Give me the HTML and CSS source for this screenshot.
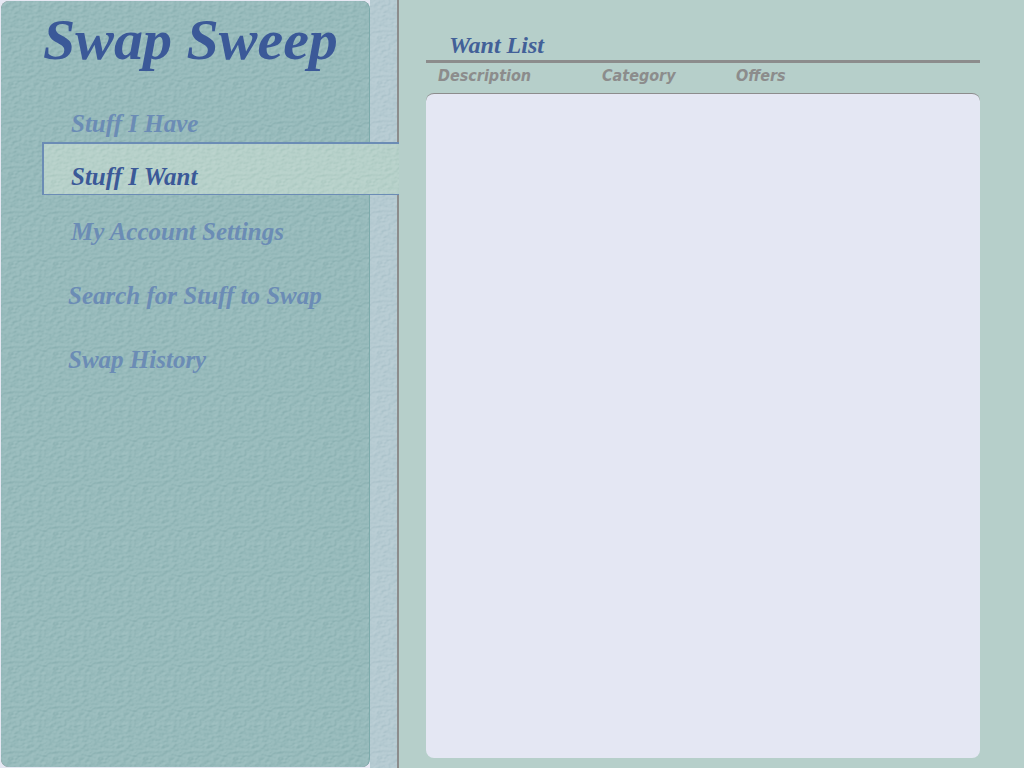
FILE: index.html
```html
<!DOCTYPE html>
<html lang="en">
<head>
<meta charset="utf-8">
<meta name="viewport" content="width=device-width, initial-scale=1">
<title>Swap Sweep</title>
<link rel="stylesheet" href="styles.css">
</head>
<body>
<div class="app">
  <div class="rail">
    <aside class="sidebar textured">
      <h1 class="brand">Swap Sweep</h1>
      <nav class="menu">
        <a class="menu-link" href="#have">Stuff I Have</a>
        <a class="menu-link active textured" href="#want" aria-current="page">Stuff I Want</a>
        <a class="menu-link" href="#account">My Account Settings</a>
        <a class="menu-link spaced" href="#search">Search for Stuff to Swap</a>
        <a class="menu-link spaced" href="#history">Swap History</a>
      </nav>
    </aside>
    <div class="strip textured"></div>
  </div>
  <main class="content">
    <h2 class="heading">Want List</h2>
    <table class="list">
      <thead>
        <tr><th class="description">Description</th><th class="category">Category</th><th>Offers</th></tr>
      </thead>
    </table>
    <div class="panel"></div>
  </main>
</div>
</body>
</html>
```

FILE: styles.css
```css
* { box-sizing: border-box; }

body {
  margin: 0;
  background: #e6e8f3;
  font-family: "DejaVu Sans", sans-serif;
}

.app {
  display: grid;
  grid-template-columns: 397px 1fr;
  min-height: 100vh;
}

.rail {
  display: flex;
  z-index: 1;
}

.textured {
  background-image: url("data:image/svg+xml,%3Csvg xmlns='http://www.w3.org/2000/svg' width='45' height='45'%3E%3Cfilter id='p' x='0' y='0' width='1' height='1' color-interpolation-filters='sRGB'%3E%3CfeTurbulence type='fractalNoise' baseFrequency='.2 .3' numOctaves='4' seed='4' stitchTiles='stitch'/%3E%3CfeDiffuseLighting surfaceScale='.6' diffuseConstant='.7' lighting-color='white'%3E%3CfeDistantLight azimuth='225' elevation='45'/%3E%3C/feDiffuseLighting%3E%3C/filter%3E%3Crect width='45' height='45' filter='url(%23p)'/%3E%3C/svg%3E");
  background-blend-mode: soft-light;
}

.sidebar {
  flex: 1;
  margin: 1px 0 1px 1px;
  border-right: 1px solid #7daaab;
  border-radius: 8px;
  background-color: #98bbbc;
  z-index: 1;
}

.strip {
  width: 27px;
  background-color: #b6cbd2;
}

.brand {
  margin: 0 0 28px 42px;
  font: italic bold 58px/78px "Liberation Serif", serif;
  color: #3b5998;
  white-space: nowrap;
}

.menu {
  display: flex;
  flex-direction: column;
}

.menu-link {
  padding-left: 70px;
  font: italic bold 25px/34px "Liberation Serif", serif;
  color: #6b8cb5;
  text-decoration: none;
  white-space: nowrap;
}

.menu-link.active {
  margin: 1px -30px 20px 41px;
  padding: 16px 0 0 27px;
  border: solid #6b8cb5;
  border-width: 2px 0 1px 2px;
  background-color: #b7d1ca;
  background-clip: padding-box;
  color: #3b5998;
}

.menu-link.spaced {
  margin-top: 30px;
  padding-left: 67px;
}

.content {
  display: flex;
  flex-direction: column;
  padding: 30px 44px 10px 27px;
  border-left: 2px solid #8c8c8c;
  background: #b6cfca;
}

.heading {
  margin: 0;
  padding-left: 23px;
  border-bottom: 3px solid #8c8c8c;
  font: italic bold 24px/30px "Liberation Serif", serif;
  color: #426098;
}

.list {
  width: 100%;
  border-collapse: collapse;
  table-layout: fixed;
}

.list th {
  padding: 0 0 4px 12px;
  font: italic bold 16px/26px "DejaVu Sans Condensed", "DejaVu Sans", sans-serif;
  color: #8c8c8c;
  text-align: left;
}

.list .description { width: 164px; }
.list .category { width: 134px; }

.panel {
  flex: 1;
  border-top: 1px solid #8c8c8c;
  border-radius: 8px;
  background: #e4e7f3;
}
```
